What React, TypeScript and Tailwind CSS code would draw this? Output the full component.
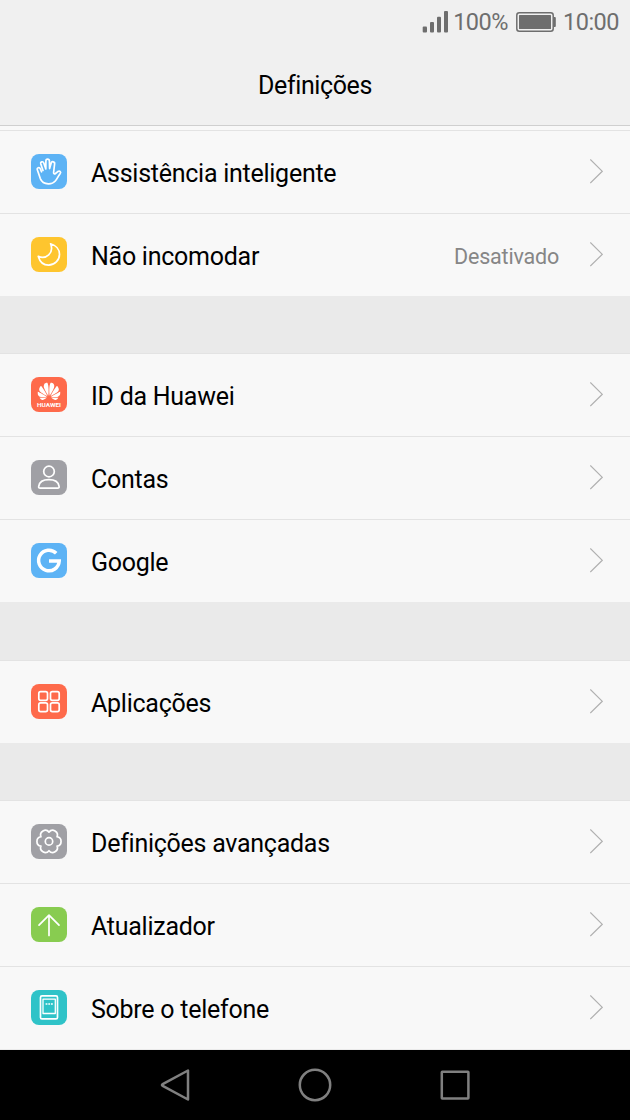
import type { ReactNode } from "react";
import { SiHuawei } from "react-icons/si";

type Item = {
  label: string;
  color: string;
  icon: ReactNode;
  value?: string;
};

const handIcon = (
  <path d="M12 16.500 9.800 9.900c-.6-2.200 2.200-3 3-.9l2 6 .1-8.100c0-2.300 3.400-2.300 3.500 0l.2 7.700 1.600-5.600c.6-2.100 3.900-1.400 3.400 1l-1 8.500c-.1 1.400.9 1.800 1.900 1l2.300-1.900c2-1.200 3.700.5 2.300 2.100-2.100 2.700-3 5.400-4.800 7.300-1.800 2.100-4 2.900-7 2.800-4-.1-6.600-1.800-8-5.200L6.300 15.800c-.7-2.200 2.200-3 3-1l1.200 3" />
);

const moonIcon = (
  <path d="M19.600 6.800c5.200 1.500 8.900 5.500 8.900 10.500 0 6-4.900 10.800-10.900 10.800-4.900 0-8.700-3.100-10.300-8.700 7.600 3.400 16-3.300 12.300-12.600Z" />
);

const huaweiIcon = (
  <>
    <SiHuawei x={6.5} y={2.8} size={23} fill="white" stroke="none" />
    <text
      x="18"
      y="29.500"
      textAnchor="middle"
      textLength="24"
      lengthAdjust="spacingAndGlyphs"
      fill="white"
      stroke="none"
      className="font-['Roboto',sans-serif] text-[5.500px] font-bold"
    >
      HUAWEI
    </text>
  </>
);

const userIcon = (
  <>
    <circle cx="18" cy="11.500" r="5.300" />
    <path d="M9.200 28.200c-1.200 0-1.700-.7-1.500-1.900.7-4.300 4.300-6.600 10.200-6.600s9.500 2.300 10.200 6.600c.2 1.200-.3 1.900-1.500 1.900Z" />
  </>
);

const googleIcon = (
  <path d="M25.200 10.200A10.300 10.300 0 1 0 28.200 18.100H18" strokeWidth="3.500" strokeLinecap="butt" strokeLinejoin="miter" />
);

const appsIcon = (
  <>
    <rect x="7.800" y="7.600" width="8.700" height="8.700" rx="1.800" />
    <rect x="19.500" y="7.600" width="8.700" height="8.700" rx="1.800" />
    <rect x="7.800" y="18.900" width="8.700" height="8.700" rx="1.800" />
    <rect x="19.500" y="18.900" width="8.700" height="8.700" rx="1.800" />
  </>
);

const gearIcon = (
  <>
    <path d="M18 8.100A4.700 4.700 0 0 1 26.050 12.750 4.700 4.700 0 0 1 26.050 22.050 4.700 4.700 0 0 1 18 26.700 4.700 4.700 0 0 1 9.950 22.050 4.700 4.700 0 0 1 9.950 12.750 4.700 4.700 0 0 1 18 8.100Z" />
    <circle cx="18" cy="17.400" r="3.700" />
  </>
);

const arrowIcon = <path d="M18 28.500V8.200M8 18.200l10-10 10 10" />;

const phoneIcon = (
  <>
    <rect x="9.500" y="5.900" width="17" height="23" rx="1.500" />
    <rect x="12" y="9.200" width="12.300" height="14.300" strokeWidth="1.300" />
    <path d="M14.600 14h1.800M17.300 14h1.800M20 14h1.800" strokeWidth="1.400" strokeLinecap="butt" />
  </>
);

const groups: { items: Item[]; gap: string }[] = [
  {
    gap: "h-[57px]",
    items: [
      { label: "Assistência inteligente", color: "bg-[#5db3f5]", icon: handIcon },
      { label: "Não incomodar", color: "bg-[#fec52e]", icon: moonIcon, value: "Desativado" },
    ],
  },
  {
    gap: "h-[58px]",
    items: [
      { label: "ID da Huawei", color: "bg-[#fe6a4b]", icon: huaweiIcon },
      { label: "Contas", color: "bg-[#a0a0a5]", icon: userIcon },
      { label: "Google", color: "bg-[#5db3f5]", icon: googleIcon },
    ],
  },
  {
    gap: "h-[57px]",
    items: [{ label: "Aplicações", color: "bg-[#fe6a4b]", icon: appsIcon }],
  },
  {
    gap: "h-px",
    items: [
      { label: "Definições avançadas", color: "bg-[#a0a0a5]", icon: gearIcon },
      { label: "Atualizador", color: "bg-[#88cc50]", icon: arrowIcon },
      { label: "Sobre o telefone", color: "bg-[#2fc3c8]", icon: phoneIcon },
    ],
  },
];

function StatusBar() {
  return (
    <div className="flex h-[44px] items-center justify-end pr-[11px] text-[23.500px] leading-none tracking-[-0.500px] text-[#6e6e6e]">
      <svg className="mr-[5px] h-[22px] w-[26px]" viewBox="0 0 26 22" fill="#6e6e6e">
        <rect x="0.700" y="15.500" width="4.300" height="6" rx="1" />
        <rect x="8" y="11" width="4" height="10.500" rx="1" />
        <rect x="15" y="5.700" width="4" height="15.800" rx="1" />
        <rect x="22" y="0" width="4" height="21.500" rx="1" />
      </svg>
      <span className="pt-px">100%</span>
      <svg className="mr-[7px] ml-[8px] h-[20px] w-[40px]" viewBox="0 0 40 20">
        <rect x="0.800" y="0.800" width="36.400" height="18.400" rx="2.500" fill="none" stroke="#6e6e6e" strokeWidth="1.500" />
        <rect x="3" y="3" width="32" height="14" rx="0.500" fill="#6e6e6e" />
        <path d="M37.500 5h1.300q1 0 1 1v8q0 1-1 1h-1.300Z" fill="#6e6e6e" />
      </svg>
      <span className="pt-px">10:00</span>
    </div>
  );
}

function SettingsRow({ item }: { item: Item }) {
  return (
    <div className="flex h-[83px] items-center border-t border-[#e3e3e3] pr-[27px] pl-[31px]">
      <div className={`-mt-px h-[35px] w-[36px] rounded-[8px] ${item.color}`}>
        <svg
          className="h-[35px] w-[36px]"
          viewBox="0 0 36 35"
          fill="none"
          stroke="white"
          strokeWidth="1.700"
          strokeLinecap="round"
          strokeLinejoin="round"
        >
          {item.icon}
        </svg>
      </div>
      <span className="ml-[24px] flex-1 pt-[3px] text-[25px] leading-none tracking-[-0.260px] text-black">{item.label}</span>
      {item.value && (
        <span className="pt-[3px] text-[21.500px] leading-none tracking-[-0.200px] text-[#868686]">{item.value}</span>
      )}
      <svg
        className="-mt-px ml-[31px] h-[25px] w-[13px]"
        viewBox="0 0 13 25"
        fill="none"
        stroke="#b0b0b0"
        strokeWidth="1.200"
      >
        <path d="M0.300 0.500 12.300 12.300 0.300 24.100" />
      </svg>
    </div>
  );
}

function NavBar() {
  return (
    <div className="flex h-[70px] items-center justify-center gap-[106px] bg-black">
      <svg className="size-[34px]" viewBox="0 0 34 34" fill="none" stroke="#808080" strokeWidth="2.500" strokeLinejoin="round">
        <path d="M30 2.500v29L4.700 17.900q-1.500-.9 0-1.800Z" />
      </svg>
      <svg className="size-[34px]" viewBox="0 0 34 34" fill="none" stroke="#808080" strokeWidth="2.500">
        <circle cx="17" cy="17" r="15.200" />
      </svg>
      <svg className="size-[34px]" viewBox="0 0 34 34" fill="none" stroke="#808080" strokeWidth="2.500" strokeLinejoin="round">
        <rect x="3.800" y="3.800" width="26.600" height="26.600" rx="0.500" />
      </svg>
    </div>
  );
}

export default function App() {
  return (
    <div className="flex h-[1120px] w-[630px] flex-col overflow-hidden bg-[#f8f8f8] font-['Roboto',sans-serif]">
      <header className="h-[126px] border-b border-[#cfcfcf] bg-[#f0f0f0]">
        <StatusBar />
        <h1 className="pt-[29px] text-center text-[25px] leading-none tracking-[-0.400px] text-black">Definições</h1>
      </header>
      <main className="pt-[4px]">
        {groups.map((group) => (
          <section key={group.items[0].label}>
            {group.items.map((item) => (
              <SettingsRow key={item.label} item={item} />
            ))}
            <div className={`${group.gap} bg-[#eaeaea]`} />
          </section>
        ))}
      </main>
      <NavBar />
    </div>
  );
}
